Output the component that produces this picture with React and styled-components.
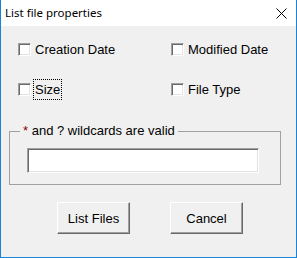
import React from "react";
import styled, { createGlobalStyle } from "styled-components";

const Global = createGlobalStyle`
  html, body { margin: 0; padding: 0; background: #f0f0f0; }
  * { box-sizing: border-box; }
`;

const Window = styled.div`
  width: 297px;
  height: 258px;
  display: flex;
  flex-direction: column;
  background: #f0f0f0;
  border: 1px solid #1883d7;
  border-top: none;
  font-family: "Liberation Sans", Arial, sans-serif;
  font-size: 13px;
  color: #000;
`;

const TitleBar = styled.div`
  height: 26px;
  flex: none;
  background: #fff;
  display: flex;
  align-items: center;
  justify-content: space-between;
  padding: 0 9px 0 4px;
  font-family: "Noto Sans", sans-serif;
  font-size: 11px;
`;

const Title = styled.span`
  line-height: 16px;
  margin-top: -1px;
  font-size: 11.5px;
`;

const Body = styled.div`
  flex: 1;
  padding: 13px 0 0 8px;
  display: flex;
  flex-direction: column;
`;

const OptionsGrid = styled.div`
  display: grid;
  grid-template-columns: 153px auto;
  row-gap: 19px;
  margin-left: 9px;
`;

const Option = styled.label`
  display: flex;
  align-items: center;
  height: 21px;
  gap: 2px;
`;

const Box = styled.span`
  width: 13px;
  height: 13px;
  flex: none;
  background: #fff;
  border: 1px solid;
  border-color: #a0a0a0 #fff #fff #a0a0a0;
  box-shadow: inset 1px 1px 0 #696969, inset -1px -1px 0 #e3e3e3;
`;

const OptionText = styled.span`
  padding: 1px 1px;
  line-height: 17px;
  border: 1px dotted ${(p) => (p.$focused ? "#000" : "transparent")};
`;

const Group = styled.fieldset`
  margin: 23px 0 0 0;
  width: 272px;
  padding: 9px 0 11px 0;
  border: 1px solid #a0a0a0;
  min-width: 0;
`;

const Legend = styled.legend`
  margin-left: 10px;
  padding: 0 3px;
  line-height: 16px;
`;

const Star = styled.span`
  color: #8b0000;
`;

const TextField = styled.input`
  display: block;
  width: 232px;
  height: 25px;
  margin: 0 0 0 17px;
  padding: 2px 4px;
  font: inherit;
  background: #fff;
  border: 1px solid;
  border-color: #a0a0a0 #fff #fff #a0a0a0;
  box-shadow: inset 1px 1px 0 #696969, inset -1px -1px 0 #e3e3e3;
  outline: none;
`;

const ButtonRow = styled.div`
  display: flex;
  gap: 40px;
  margin: 17px 0 0 48px;
`;

const Button = styled.button`
  width: 73px;
  height: 32px;
  margin: 0;
  padding: 0;
  font: inherit;
  font-size: 13px;
  color: #000;
  background: #f0f0f0;
  border: 1px solid;
  border-color: #fff #696969 #696969 #fff;
  box-shadow: inset -1px -1px 0 #a0a0a0;
`;

const CloseIcon = () => (
  <svg width="11" height="11" viewBox="0 0 11 11">
    <path d="M0.5 0.5 L10.5 10.5 M10.5 0.5 L0.5 10.5" stroke="#000" strokeWidth="1" fill="none" />
  </svg>
);

export default function App() {
  return (
    <>
      <Global />
      <Window>
        <TitleBar>
          <Title>List file properties</Title>
          <CloseIcon />
        </TitleBar>
        <Body>
          <OptionsGrid>
            <Option><Box /><OptionText>Creation Date</OptionText></Option>
            <Option><Box /><OptionText>Modified Date</OptionText></Option>
            <Option><Box /><OptionText $focused>Size</OptionText></Option>
            <Option><Box /><OptionText>File Type</OptionText></Option>
          </OptionsGrid>
          <Group>
            <Legend><Star>*</Star> and ? wildcards are valid</Legend>
            <TextField type="text" />
          </Group>
          <ButtonRow>
            <Button>List Files</Button>
            <Button>Cancel</Button>
          </ButtonRow>
        </Body>
      </Window>
    </>
  );
}
